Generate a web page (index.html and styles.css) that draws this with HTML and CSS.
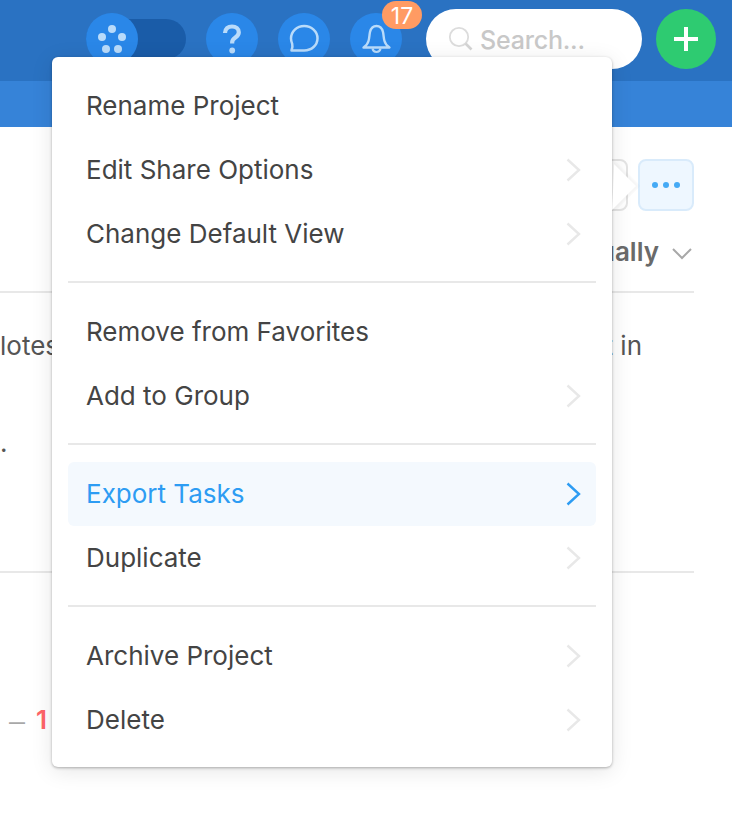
FILE: index.html
```html
<!DOCTYPE html>
<html lang="en">
<head>
<meta charset="utf-8">
<title>Project menu</title>
<link rel="stylesheet" href="styles.css">
</head>
<body>
<header class="topbar">
  <div class="logo-toggle">
    <span class="round-btn">
      <svg width="52" height="52" viewBox="0 0 52 52"><g fill="#b9dbfa"><circle cx="26" cy="16" r="4"/><circle cx="16" cy="24" r="4"/><circle cx="36" cy="24" r="4"/><circle cx="20" cy="36" r="4"/><circle cx="32" cy="36" r="4"/></g></svg>
    </span>
  </div>
  <span class="round-btn help">
    <svg width="52" height="52" viewBox="0 0 52 52"><path d="M19 20c.2-4.200 3-6.500 7-6.500 4 0 6.800 2.300 6.800 5.700 0 2.600-1.500 3.900-3.400 5.200-2 1.400-3.200 2.400-3.200 4.700v1.400" fill="none" stroke="#b9dbfa" stroke-width="4.200"/><circle cx="26.200" cy="37.500" r="2.900" fill="#b9dbfa"/></svg>
  </span>
  <span class="round-btn">
    <svg width="52" height="52" viewBox="0 0 52 52"><path d="M13.500 37.500c.9-2.800 1.300-4.800.7-6.600-.7-1.900-1.200-3.500-1.200-5.400 0-7 5.900-12.500 13.200-12.500 7.300 0 13.300 5.500 13.300 12.300 0 7-6 12.200-13.300 12.200-3.500 0-8.200-.1-12.700 0z" fill="none" stroke="#b9dbfa" stroke-width="2.500" stroke-linejoin="round"/></svg>
  </span>
  <span class="round-btn bell">
    <svg width="52" height="52" viewBox="0 0 52 52"><path d="M13.500 34.500c2.500-1.500 4.200-3.500 5-6.500 1-3.500.8-6 1.500-9 .8-3.300 3-6 6.500-6s5.700 2.700 6.500 6c.7 3 .5 5.500 1.500 9 .8 3 2.500 5 5 6.500z" fill="none" stroke="#b9dbfa" stroke-width="2.400" stroke-linejoin="round"/><path d="M22.500 35.500c.5 2.300 2 3.500 4 3.500s3.500-1.200 4-3.500" fill="none" stroke="#b9dbfa" stroke-width="2.200"/></svg>
    <span class="badge">17</span>
  </span>
  <div class="search">
    <svg width="26" height="26" viewBox="0 0 26 26"><circle cx="11" cy="11" r="9.200" fill="none" stroke="#dcdcdc" stroke-width="1.800"/><path d="M17.500 17.500l6 6" stroke="#d4d4d4" stroke-width="2.600"/></svg>
    <span class="search-text">Search...</span>
  </div>
  <span class="add-btn">
    <svg width="24" height="24" viewBox="0 0 24 24"><path d="M12 0v24M0 12h24" stroke="#fff" stroke-width="4"/></svg>
  </span>
</header>
<div class="subbar"></div>

<main class="content">
  <div class="toolbar">
    <span class="tool-btn"></span>
    <span class="tool-btn active">
      <svg width="28" height="8" viewBox="0 0 28 8"><g fill="#45aaf5"><circle cx="3" cy="4" r="3"/><circle cx="14" cy="4" r="3"/><circle cx="25" cy="4" r="3"/></g></svg>
    </span>
  </div>
  <div class="sort">
    <span class="sort-label">ually</span>
    <svg width="20" height="12" viewBox="0 0 20 12"><path d="M1 1l9 9 9-9" fill="none" stroke="#a8a8a8" stroke-width="2"/></svg>
  </div>
  <section class="notes">
    <p class="notes-line"><span>lotes</span><span>t in</span></p>
    <p class="notes-dot">.</p>
  </section>
  <div class="due"><span class="dash">—</span><span class="num">1</span></div>
</main>

<nav class="menu">
  <span class="menu-arrow"></span>
  <ul class="group">
    <li class="item"><span>Rename Project</span></li>
    <li class="item"><span>Edit Share Options</span><svg class="chev" width="15" height="24" viewBox="0 0 15 24"><path d="M1.500 1.500L13 12 1.500 22.500" fill="none" stroke="currentColor" stroke-width="2.400"/></svg></li>
    <li class="item"><span>Change Default View</span><svg class="chev" width="15" height="24" viewBox="0 0 15 24"><path d="M1.500 1.500L13 12 1.500 22.500" fill="none" stroke="currentColor" stroke-width="2.400"/></svg></li>
  </ul>
  <ul class="group">
    <li class="item"><span>Remove from Favorites</span></li>
    <li class="item"><span>Add to Group</span><svg class="chev" width="15" height="24" viewBox="0 0 15 24"><path d="M1.500 1.500L13 12 1.500 22.500" fill="none" stroke="currentColor" stroke-width="2.400"/></svg></li>
  </ul>
  <ul class="group">
    <li class="item hover"><span>Export Tasks</span><svg class="chev" width="15" height="24" viewBox="0 0 15 24"><path d="M1.500 1.500L13 12 1.500 22.500" fill="none" stroke="currentColor" stroke-width="2.400"/></svg></li>
    <li class="item"><span>Duplicate</span><svg class="chev" width="15" height="24" viewBox="0 0 15 24"><path d="M1.500 1.500L13 12 1.500 22.500" fill="none" stroke="currentColor" stroke-width="2.400"/></svg></li>
  </ul>
  <ul class="group">
    <li class="item"><span>Archive Project</span><svg class="chev" width="15" height="24" viewBox="0 0 15 24"><path d="M1.500 1.500L13 12 1.500 22.500" fill="none" stroke="currentColor" stroke-width="2.400"/></svg></li>
    <li class="item"><span>Delete</span><svg class="chev" width="15" height="24" viewBox="0 0 15 24"><path d="M1.500 1.500L13 12 1.500 22.500" fill="none" stroke="currentColor" stroke-width="2.400"/></svg></li>
  </ul>
</nav>
</body>
</html>
```
FILE: styles.css
```css
* { box-sizing: border-box; }
html, body { margin: 0; padding: 0; }
body {
  width: 732px;
  height: 823px;
  overflow: hidden;
  position: relative;
  background: #fff;
  font-family: "Inter", "Liberation Sans", sans-serif;
  color: #444;
}
.topbar {
  height: 81px;
  padding: 0 16px 3px 86px;
  background: #2a72c2;
  display: flex;
  align-items: center;
}
.logo-toggle {
  width: 100px;
  height: 40px;
  border-radius: 20px;
  background: #1a5ca8;
  display: flex;
  align-items: center;
  margin-right: 20px;
}
.round-btn {
  width: 52px;
  height: 52px;
  flex: none;
  border-radius: 50%;
  background: #2a87e8;
  position: relative;
  display: block;
}
.round-btn svg { display: block; }
.round-btn + .round-btn { margin-left: 20px; }
.badge {
  position: absolute;
  left: 32px;
  top: -12px;
  width: 40px;
  height: 28px;
  border-radius: 14px;
  background: #ff9b63;
  color: #fff;
  font-size: 23px;
  line-height: 30px;
  text-align: center;
}
.search {
  width: 216px;
  height: 60px;
  margin-left: 24px;
  padding-left: 22px;
  border-radius: 30px;
  background: #fff;
  display: flex;
  align-items: center;
  gap: 6px;
}
.search-text {
  font-size: 25px;
  font-weight: 500;
  letter-spacing: -.2px;
  line-height: 34px;
  padding-top: 2px;
  color: #c8c8c8;
}
.add-btn {
  width: 60px;
  height: 60px;
  margin-left: 14px;
  border-radius: 50%;
  background: #2ecb71;
  display: flex;
  align-items: center;
  justify-content: center;
}
.subbar {
  height: 46px;
  background: #3683d8;
}
.content {
  padding: 32px 38px 0 0;
}
.toolbar {
  display: flex;
  justify-content: flex-end;
  gap: 10px;
}
.tool-btn {
  width: 56px;
  height: 52px;
  border: 2px solid #e4e4e4;
  border-radius: 8px;
  display: flex;
  align-items: center;
  justify-content: center;
}
.tool-btn.active {
  background: #eef7ff;
  border-color: #d9ebfb;
}
.sort {
  height: 82px;
  padding-top: 26px;
  padding-right: 2px;
  border-bottom: 2px solid #e8e8e8;
  display: flex;
  justify-content: flex-end;
  align-items: flex-start;
  gap: 13px;
}
.sort svg { margin-top: 11px; }
.sort-label {
  font-size: 26px;
  font-weight: 600;
  line-height: 30px;
  color: #6a6a6a;
}
.notes {
  height: 280px;
  padding-top: 37px;
  border-bottom: 2px solid #e8e8e8;
  font-size: 26px;
  line-height: 32px;
  color: #555;
}
.notes p { margin: 0; }
.notes-line {
  width: 642px;
  display: flex;
  justify-content: space-between;
}
.notes-dot { margin-top: 65px !important; line-height: 32px; }
.due {
  margin-top: 131px;
  padding-left: 9px;
  display: flex;
  gap: 11px;
  font-size: 26px;
  line-height: 32px;
}
.dash { color: #a8a8a8; font-size: 16px; font-weight: 600; line-height: 36px; }
.num { color: #ff6468; font-weight: 600; }

.menu {
  position: absolute;
  left: 52px;
  top: 57px;
  width: 560px;
  height: 710px;
  padding: 17px 16px 15px;
  border-radius: 6px;
  background: #fff;
  box-shadow: 0 1px 3px rgba(0,0,0,.3), 0 4px 22px rgba(0,0,0,.1);
}
.menu-arrow {
  position: absolute;
  left: 543px;
  top: 112px;
  width: 34px;
  height: 34px;
  background: #fff;
  transform: rotate(45deg);
  box-shadow: 2px -2px 4px rgba(0,0,0,.05);
  clip-path: polygon(0 -10%, 110% -10%, 110% 110%);
}
.group {
  margin: 0;
  padding: 0;
  list-style: none;
}
.group + .group {
  margin-top: 15px;
  padding-top: 17px;
  border-top: 2px solid #e8e8e8;
  position: relative;
}
.item {
  height: 64px;
  padding: 0 15px 0 18px;
  border-radius: 6px;
  display: flex;
  align-items: center;
  justify-content: space-between;
  font-size: 26px;
  color: #444;
}
.item span { padding-bottom: 2px; }
.chev { color: #e8e8e8; flex: none; }
.item.hover {
  background: #f4f9fe;
  color: #2d9cf3;
}
.item.hover .chev { color: #2d9cf3; }
```
